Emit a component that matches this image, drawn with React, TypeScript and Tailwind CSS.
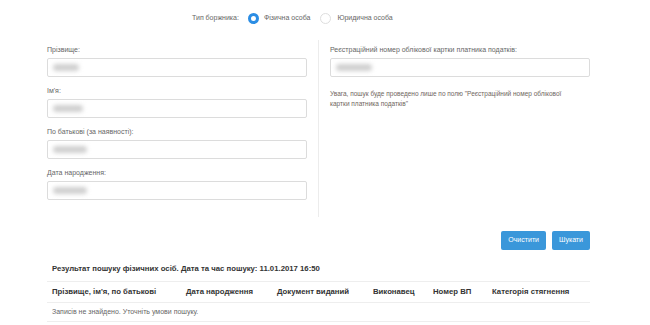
import React from 'react';

const fields = [
  { label: 'Прізвище:', blur: 'w-[26px]' },
  { label: "Ім'я:", blur: 'w-[30px]' },
  { label: 'По батькові (за наявності):', blur: 'w-[34px]' },
  { label: 'Дата народження:', blur: 'w-[34px]' },
];

const columns = [
  { title: "Прізвище, ім'я, по батькові", w: 'w-[134px]' },
  { title: 'Дата народження', w: 'w-[91px]' },
  { title: 'Документ виданий', w: 'w-[96px]' },
  { title: 'Виконавец', w: 'w-[60px]' },
  { title: 'Номер ВП', w: 'w-[59px]' },
  { title: 'Категорія стягнення', w: 'flex-1' },
];

function BlurValue({ w }: { w: string }) {
  return <span className={`inline-block h-[7px] ${w} rounded-sm bg-[#cfcfcf] blur-[2px]`} />;
}

function Field({ label, blur }: { label: string; blur: string }) {
  return (
    <div className="mb-[9px]">
      <div className="h-[10px] leading-[10px] text-[7px] text-[#666] mb-[3px]">{label}</div>
      <div className="h-[19px] rounded-[2px] border border-[#dcdcdc] bg-white flex items-center pl-[5px]">
        <BlurValue w={blur} />
      </div>
    </div>
  );
}

export default function App() {
  return (
    <div className="w-[650px] h-[325px] overflow-hidden bg-white font-['Liberation_Sans',Arial,sans-serif] text-[#333]">
      {/* debtor type */}
      <div className="h-[40px] pt-[12px] pl-[192px]">
        <div className="flex items-center h-[12px] text-[7px] text-[#666]">
          <span className="mr-[9px]">Тип боржника:</span>
          <span className="w-[11px] h-[11px] rounded-full border-[3px] border-[#2b8de4] bg-white mr-[5px]" />
          <span className="mr-[10px]">Фізична особа</span>
          <span className="w-[11px] h-[11px] rounded-full border border-[#dedede] bg-white mr-[6px]" />
          <span>Юридична особа</span>
        </div>
      </div>

      {/* form */}
      <div className="flex pl-[47px]">
        <div className="w-[272px] pr-[11px] pt-[5px] pb-[8px] border-r border-[#ececec]">
          {fields.map((f) => (
            <Field key={f.label} label={f.label} blur={f.blur} />
          ))}
        </div>
        <div className="w-[271px] pl-[11px] pt-[5px]">
          <div className="h-[10px] leading-[10px] text-[7px] text-[#666] mb-[3px]">
            Реєстраційний номер облікової картки платника податків:
          </div>
          <div className="h-[19px] rounded-[2px] border border-[#dcdcdc] bg-white flex items-center pl-[5px]">
            <BlurValue w="w-[36px]" />
          </div>
          <p className="mt-[12px] whitespace-nowrap text-[6.5px] leading-[10px] text-[#6f665e]">
            Увага, пошук буде проведено лише по полю "Реєстраційний номер облікової
            <br />
            картки платника податків"
          </p>
        </div>
      </div>

      {/* buttons */}
      <div className="flex justify-end gap-[6px] w-[590px] mt-[14px]">
        <button type="button" className="h-[19px] px-[7px] rounded-[2px] bg-[#3a97da] text-white text-[7px]">
          Очистити
        </button>
        <button type="button" className="h-[19px] px-[7px] rounded-[2px] bg-[#3a97da] text-white text-[7px]">
          Шукати
        </button>
      </div>

      {/* results */}
      <div className="ml-[47px] w-[543px] mt-[13px]">
        <div className="h-[18px] pl-[5px] text-[7.75px] font-bold leading-[12px]">
          Результат пошуку фізичних осіб. Дата та час пошуку: 11.01.2017 16:50
        </div>
        <div className="flex h-[21px] items-center border-t border-[#eeeeee] pl-[5px] text-[7.75px] font-bold">
          {columns.map((c) => (
            <div key={c.title} className={c.w}>
              {c.title}
            </div>
          ))}
        </div>
        <div className="h-[20px] flex items-center border-t border-b border-[#eeeeee] pl-[5px] text-[7px] text-[#666]">
          Записів не знайдено. Уточніть умови пошуку.
        </div>
      </div>
    </div>
  );
}
